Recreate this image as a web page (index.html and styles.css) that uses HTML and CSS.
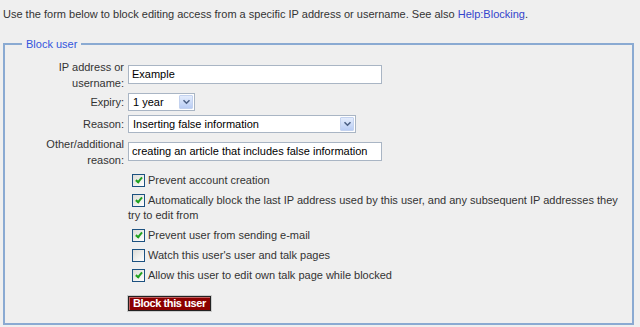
FILE: index.html
```html
<!DOCTYPE html>
<html>
<head>
<meta charset="utf-8">
<link rel="stylesheet" href="styles.css">
</head>
<body>
<p class="intro">Use the form below to block editing access from a specific IP address or username. See also <a href="#" class="link">Help:Blocking</a>.</p>
<fieldset class="box">
  <legend class="legend">Block user</legend>
  <div class="form">
    <label class="lbl">IP address or<br>username:</label>
    <div class="fld"><span class="text wide">Example</span></div>

    <label class="lbl">Expiry:</label>
    <div class="fld"><span class="select expiry"><span class="val">1 year</span><span class="arrow"><svg width="9" height="6" viewBox="0 0 9 6"><path d="M1.5 1.2 L4.5 4.2 L7.5 1.2" fill="none" stroke="#4d6185" stroke-width="1.6"/></svg></span></span></div>

    <label class="lbl">Reason:</label>
    <div class="fld"><span class="select reason"><span class="val">Inserting false information</span><span class="arrow"><svg width="9" height="6" viewBox="0 0 9 6"><path d="M1.5 1.2 L4.5 4.2 L7.5 1.2" fill="none" stroke="#4d6185" stroke-width="1.6"/></svg></span></span></div>

    <label class="lbl">Other/additional<br>reason:</label>
    <div class="fld"><span class="text wide">creating an article that includes false information</span></div>

    <div class="checks">
      <div class="chk"><span class="cb on"></span>Prevent account creation</div>
      <div class="chk"><span class="cb on"></span>Automatically block the last IP address used by this user, and any subsequent IP addresses they try to edit from</div>
      <div class="chk"><span class="cb on"></span>Prevent user from sending e-mail</div>
      <div class="chk"><span class="cb"></span>Watch this user's user and talk pages</div>
      <div class="chk"><span class="cb on"></span>Allow this user to edit own talk page while blocked</div>
      <div class="btnrow"><span class="btn">Block this user</span></div>
    </div>
  </div>
</fieldset>
</body>
</html>
```
FILE: styles.css
```css
html, body {
  margin: 0;
  padding: 0;
  background: #efefef;
}
body {
  font-family: "Liberation Sans", Arial, sans-serif;
  font-size: 11px;
  color: #333;
  width: 640px;
  height: 327px;
  overflow: hidden;
}
.intro {
  margin: 0;
  padding: 6px 0 0 3px;
  line-height: 16px;
}
.link {
  color: #3344cc;
  text-decoration: none;
}
.box {
  margin: 15px 6px 0 3px;
  padding: 0;
  border: 2px solid #8aaad2;
  height: 288px;
  box-sizing: border-box;
}
.legend {
  color: #3355dd;
  margin-left: 17px;
  padding: 0 4px;
  line-height: 14px;
}
.form {
  display: grid;
  grid-template-columns: 119px 1fr;
  grid-template-rows: 33px 22px 22px 33px auto;
  column-gap: 4px;
  align-items: center;
  margin-top: 7px;
}
.lbl {
  text-align: right;
  line-height: 16px;
}
.fld {
  display: flex;
  align-items: center;
}
.text {
  display: inline-block;
  box-sizing: border-box;
  height: 19px;
  background: #fff;
  border: 1px solid #a9b5c4;
  padding: 0 3px;
  line-height: 17px;
  font-size: 11px;
  color: #000;
  white-space: nowrap;
  overflow: hidden;
}
.wide { width: 254px; }
.select {
  display: inline-flex;
  align-items: center;
  justify-content: space-between;
  box-sizing: border-box;
  height: 18px;
  background: #fff;
  border: 1px solid #a9b5c4;
  padding: 0 1px 0 4px;
  color: #000;
  font-size: 11px;
  white-space: nowrap;
}
.expiry { width: 67px; }
.reason { width: 228px; }
.arrow {
  width: 14px;
  height: 14px;
  background: linear-gradient(#e3ecfc, #b9cdf4);
  border: 1px solid #c3d2ef;
  border-radius: 1px;
  box-sizing: border-box;
  display: flex;
  align-items: center;
  justify-content: center;
}
.checks {
  grid-column: 2;
  align-self: start;
  padding-top: 2px;
}
.chk {
  line-height: 15px;
  padding: 2.5px 0;
}
.cb {
  display: inline-block;
  width: 13px;
  height: 13px;
  box-sizing: border-box;
  border: 1px solid #1c5180;
  background: linear-gradient(135deg, #dcdcd7, #fff);
  margin: 0 3px 0 4px;
  vertical-align: -3px;
  position: relative;
}
.cb.on::after {
  content: "";
  position: absolute;
  left: 3.5px;
  top: 1.5px;
  width: 2px;
  height: 5px;
  border-right: 2px solid #21a121;
  border-bottom: 2px solid #21a121;
  transform: rotate(40deg);
}
.btnrow {
  padding-top: 11px;
}
.btn {
  display: inline-block;
  background: #8b0000;
  color: #fff;
  font-weight: bold;
  padding: 0 4px;
  line-height: 13px;
  border: 1px solid #222;
  box-shadow: inset 1px 1px 0 #c56060, 0 0 0 1px #ccc;
  font-size: 11px;
  letter-spacing: -0.4px;
}
```
